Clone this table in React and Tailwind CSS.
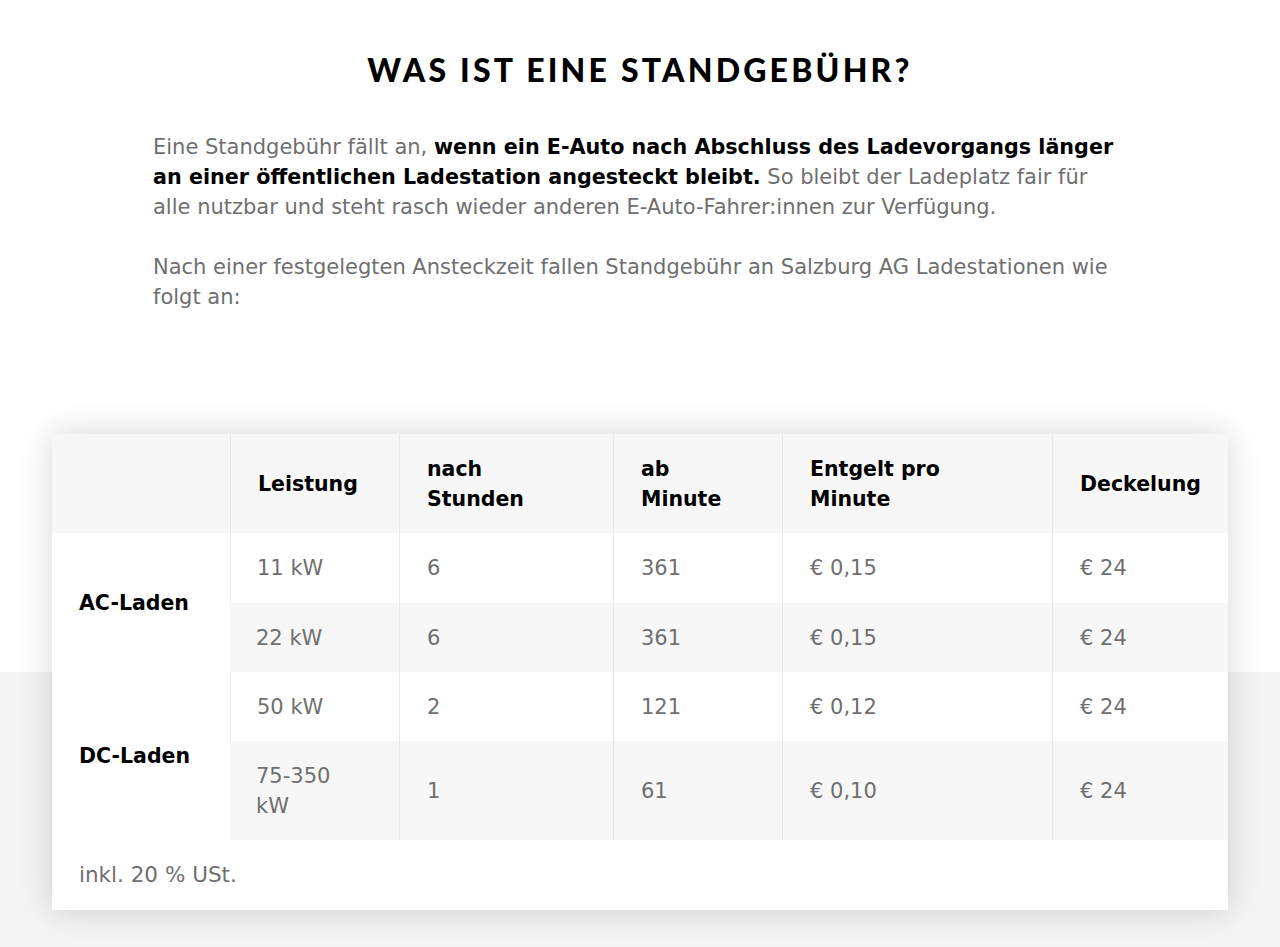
import React from "react";

const rows = [
  { group: "AC-Laden", span: 2, power: ["11 kW"], hours: "6", minute: "361", price: "€ 0,15", cap: "€ 24", gray: false },
  { power: ["22 kW"], hours: "6", minute: "361", price: "€ 0,15", cap: "€ 24", gray: true },
  { group: "DC-Laden", span: 2, power: ["50 kW"], hours: "2", minute: "121", price: "€ 0,12", cap: "€ 24", gray: false },
  { power: ["75-350", "kW"], hours: "1", minute: "61", price: "€ 0,10", cap: "€ 24", gray: true },
];

export default function App() {
  return (
    <div className="min-h-screen pb-10 bg-[linear-gradient(to_bottom,#ffffff_0,#ffffff_672px,#f4f4f4_672px)] font-['DejaVu_Sans',sans-serif]">
      {/* Titel + Text */}
      <div className="pt-[52px] text-center">
        <h1 className="font-['Lato',sans-serif] font-black text-[32px] leading-[36px] tracking-[3.2px] text-black">
          WAS IST EINE STANDGEBÜHR?
        </h1>
      </div>

      <div className="mx-auto w-[974px] mt-[44px] text-[21px] leading-[30px] text-[#6f6f6f]">
        <p>
          Eine Standgebühr fällt an,{" "}
          <strong className="font-bold text-black text-[20.7px]">
            wenn ein E-Auto nach Abschluss des Ladevorgangs länger an einer öffentlichen Ladestation angesteckt bleibt.
          </strong>{" "}
          So bleibt der Ladeplatz fair für alle nutzbar und steht rasch wieder anderen E-Auto-Fahrer:innen zur Verfügung.
        </p>
        <p className="mt-[30px]">
          Nach einer festgelegten Ansteckzeit fallen Standgebühr an Salzburg AG Ladestationen wie folgt an:
        </p>
      </div>

      {/* Tabelle */}
      <div className="mx-auto mt-[122px] w-[1176px] bg-white shadow-[0_0_32px_rgba(0,0,0,0.16)]">
        <table className="w-full table-fixed border-separate border-spacing-0 text-[21px] leading-[30px]">
          <colgroup>
            <col className="w-[178px]" />
            <col className="w-[169px]" />
            <col className="w-[214px]" />
            <col className="w-[169px]" />
            <col className="w-[270px]" />
            <col className="w-[176px]" />
          </colgroup>
          <thead>
            <tr className="bg-[#f7f7f7] text-left text-black text-[20.5px]">
              <th className="h-[99px]" />
              <th className="pl-[27px] align-middle font-bold border-l border-[#e9e9e9]">Leistung</th>
              <th className="pl-[27px] align-middle font-bold border-l border-[#e9e9e9]">
                nach
                <br />
                Stunden
              </th>
              <th className="pl-[27px] align-middle font-bold border-l border-[#e9e9e9]">
                ab
                <br />
                Minute
              </th>
              <th className="pl-[27px] align-middle font-bold border-l border-[#e9e9e9]">
                Entgelt pro
                <br />
                Minute
              </th>
              <th className="pl-[27px] align-middle font-bold border-l border-[#e9e9e9]">Deckelung</th>
            </tr>
          </thead>
          <tbody className="text-[#6f6f6f]">
            {rows.map((r, i) => {
              const py = i === 0 ? "py-[20px]" : "py-[19.5px]";
              return (
                <tr key={i} className={r.gray ? "bg-[#f7f7f7]" : "bg-white"}>
                  {r.group && (
                    <td rowSpan={r.span} className="bg-white pl-[27px] font-bold text-black text-[20.5px] align-middle">
                      {r.group}
                    </td>
                  )}
                  <td className={`pl-[26px] ${py} align-middle ${r.gray ? "" : "border-l border-[#e9e9e9]"}`}>
                    {r.power.map((p, j) => (
                      <div key={j}>{p}</div>
                    ))}
                  </td>
                  <td className={`pl-[27px] ${py} align-middle border-l border-[#e9e9e9]`}>{r.hours}</td>
                  <td className={`pl-[27px] ${py} align-middle border-l border-[#e9e9e9]`}>{r.minute}</td>
                  <td className={`pl-[27px] ${py} align-middle border-l border-[#e9e9e9]`}>{r.price}</td>
                  <td className={`pl-[27px] ${py} align-middle border-l border-[#e9e9e9]`}>{r.cap}</td>
                </tr>
              );
            })}
          </tbody>
        </table>
        <div className="h-[70px] flex items-center pl-[27px] text-[21.5px] leading-[30px] text-[#6f6f6f]">
          inkl. 20 % USt.
        </div>
      </div>
    </div>
  );
}
